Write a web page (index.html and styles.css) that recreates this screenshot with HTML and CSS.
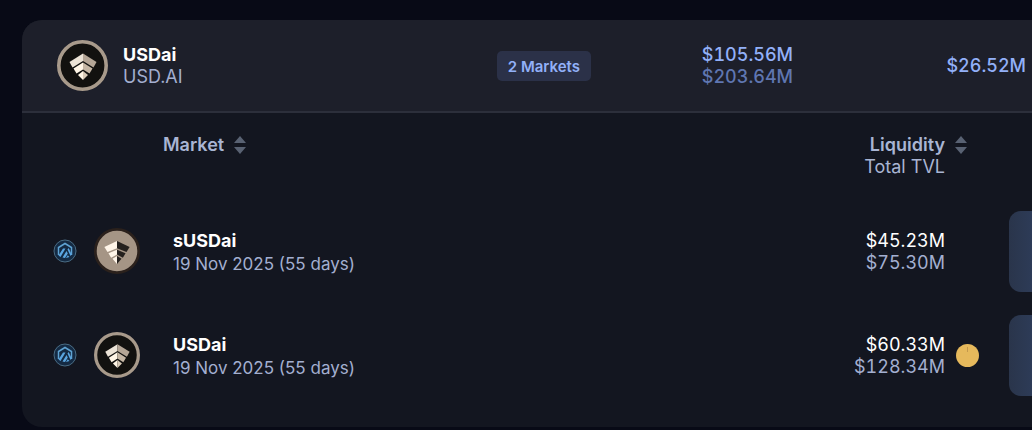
FILE: index.html
```html
<!doctype html>
<html lang="en">
    <head>
        <meta charset="utf-8">
        <meta name="viewport" content="width=device-width, initial-scale=1">
        <title>Markets</title>
        <link rel="stylesheet" href="styles.css">
    </head>
    <body>
        <svg class="is-hidden" aria-hidden="true">
            <symbol id="sort" viewBox="0 0 12 18">
                <path d="M6 0L12 7H0z"/>
                <path d="M6 18L0 11H12z"/>
            </symbol>
            <symbol id="usdai" viewBox="0 0 51 51">
                <circle cx="25.500" cy="25.500" r="23.700" fill="#12110f" stroke="#a89a8b" stroke-width="3.600"/>
                <path d="M26 13.500L12.500 22l3 5.500L26 21z" fill="#ece3d6"/>
                <path d="M26 13.500L39.500 22l-3 5.500L26 21z" fill="#b5a696"/>
                <path d="M26 22.500L16.500 28.500l3 5L26 29.500z" fill="#fff5e6"/>
                <path d="M26 22.500l9.500 6-3 5L26 29.500z" fill="#c5b6a4"/>
                <path d="M26 31L21 35l5 5z" fill="#fff5e6"/>
                <path d="M26 31l5 4-5 5z" fill="#d8cab8"/>
            </symbol>
            <symbol id="susdai" viewBox="0 0 51 51">
                <circle cx="25.500" cy="25.500" r="24" fill="#a59585" stroke="#2b211c" stroke-width="3"/>
                <path d="M25.500 14.500L11.500 21l3.500 5.500 10.500-4z" fill="#fff5e8"/>
                <path d="M25.500 14.500l14 6.500-3.500 5.500-10.500-4z" fill="#25211e"/>
                <path d="M25.500 24L16 28l3 5 6.500-3.500z" fill="#fff5e8"/>
                <path d="M25.500 24L35 28l-3 5-6.500-3.500z" fill="#25211e"/>
                <path d="M25.500 31l-5 3 5 6z" fill="#fff5e8"/>
                <path d="M25.500 31l5 3-5 6z" fill="#25211e"/>
            </symbol>
            <symbol id="arbitrum" viewBox="0 0 24 24">
                <circle cx="12" cy="12" r="11" fill="#142a43" stroke="#4a6c84"/>
                <path d="M5.500 16V8.500L12 4.500l6.500 4V16" fill="none" stroke="#5fa3d3" stroke-width="1.500"/>
                <path d="M5.500 16.500l4.500-7h2.500L7.500 18zM9.500 18.500l4-6.500 1.300 2.500-2.800 4.500zM14.500 10.500l1.200-1.500 3 6.500-1.200 1.500z" fill="#5aa5e0"/>
                <path d="M13 19l1.800-2.800L16.500 18z" fill="#5aa5e0"/>
            </symbol>
        </svg>
        <section class="panel">
            <header class="summary">
                <div class="asset">
                    <svg class="asset-icon" aria-hidden="true"><use href="#usdai"/></svg>
                    <div>
                        <h1 class="name">USDai</h1>
                        <div class="muted">USD.AI</div>
                    </div>
                </div>
                <span class="badge">2 Markets</span>
                <div class="totals">
                    <div>$105.56M</div>
                    <div class="totals-sub">$203.64M</div>
                </div>
                <div class="totals">$26.52M</div>
            </header>
            <table class="markets">
                <thead>
                    <tr>
                        <th class="market-head" scope="col">
                            <button class="sort" type="button">Market <svg class="sort-icon" aria-hidden="true"><use href="#sort"/></svg></button>
                        </th>
                        <th class="liquidity-col" scope="col">
                            <div class="liquidity">
                                <button class="sort" type="button">
                                    <span>Liquidity<br><span class="sort-sub">Total TVL</span></span>
                                    <svg class="sort-icon" aria-hidden="true"><use href="#sort"/></svg>
                                </button>
                            </div>
                        </th>
                        <td class="action-col"></td>
                    </tr>
                </thead>
                <tbody>
                    <tr>
                        <td>
                            <div class="market">
                                <svg class="chain-icon" aria-hidden="true"><use href="#arbitrum"/></svg>
                                <svg class="market-icon" aria-hidden="true"><use href="#susdai"/></svg>
                                <div class="market-text">
                                    <div class="name">sUSDai</div>
                                    <div class="expiry">19 Nov 2025 (55 days)</div>
                                </div>
                            </div>
                        </td>
                        <td>
                            <div class="liquidity">
                                <div class="amounts">
                                    <div class="value">$45.23M</div>
                                    <div class="muted">$75.30M</div>
                                </div>
                                <span class="slot"></span>
                            </div>
                        </td>
                        <td><button class="action" type="button" aria-label="Open sUSDai market"></button></td>
                    </tr>
                    <tr>
                        <td>
                            <div class="market">
                                <svg class="chain-icon" aria-hidden="true"><use href="#arbitrum"/></svg>
                                <svg class="market-icon" aria-hidden="true"><use href="#usdai"/></svg>
                                <div class="market-text">
                                    <div class="name">USDai</div>
                                    <div class="expiry">19 Nov 2025 (55 days)</div>
                                </div>
                            </div>
                        </td>
                        <td>
                            <div class="liquidity">
                                <div class="amounts">
                                    <div class="value">$60.33M</div>
                                    <div class="muted">$128.34M</div>
                                </div>
                                <svg class="slot" viewBox="0 0 23 23" aria-hidden="true">
                                    <circle cx="11.500" cy="11.500" r="11.500" fill="#e6b95c"/>
                                    <path d="M11.500 3v5" stroke="#c4994d"/>
                                </svg>
                            </div>
                        </td>
                        <td><button class="action" type="button" aria-label="Open USDai market"></button></td>
                    </tr>
                </tbody>
            </table>
        </section>
    </body>
</html>
```
FILE: styles.css
```css
* {
    box-sizing: border-box;
}
body {
    margin: 0;
    padding: 20px 0 3px 22px;
    background-color: #080a16;
    color: #a3afd0;
    font-family: Inter, "Liberation Sans", sans-serif;
    font-size: 18px;
    line-height: 22px;
}
svg {
    display: block;
    flex-shrink: 0;
}
.is-hidden {
    display: none;
}
.panel {
    background-color: #131620;
    border-radius: 20px 0 0 20px;
    padding-bottom: 20px;
    overflow: hidden;
}
.summary {
    display: grid;
    grid-template-columns: 1fr auto 202px 233px;
    align-items: center;
    padding: 20px 6px 20px 35px;
    background-color: #1d1f2a;
    border-bottom: 2px solid #2c2f3b;
}
.asset {
    display: flex;
    align-items: center;
    gap: 15px;
}
.asset-icon {
    width: 51px;
    height: 51px;
}
.name {
    margin: 0;
    color: #fff;
    font-size: 18px;
    font-weight: 700;
}
.muted {
    color: #a3afd0;
}
.badge {
    padding: 5px 11px 3px;
    border-radius: 5px;
    background-color: #2b3148;
    color: #92b0f8;
    font-size: 15px;
    font-weight: 600;
}
.totals {
    color: #92b0f8;
    font-variant-numeric: tabular-nums;
    font-weight: 500;
    text-align: right;
}
.totals-sub {
    color: #5f76b1;
}
.markets {
    width: 100%;
    border-collapse: collapse;
    table-layout: fixed;
}
.markets th,
.markets td {
    padding: 0;
    text-align: left;
}
.markets thead th {
    padding: 21px 0;
    vertical-align: top;
}
.markets .market-head {
    padding-left: 141px;
}
.markets tbody tr {
    height: 104px;
}
.liquidity-col {
    width: 300px;
}
.action-col {
    width: 23px;
}
.sort {
    display: flex;
    gap: 10px;
    padding: 0;
    border: 0;
    background: none;
    color: #a9b5d3;
    font: inherit;
    font-weight: 600;
    text-align: right;
    cursor: pointer;
}
.sort-sub {
    font-weight: 400;
}
.sort-icon {
    width: 12px;
    height: 18px;
    margin-top: 2px;
    fill: #596273;
}
.market {
    display: flex;
    align-items: center;
    padding-left: 31px;
}
.market-text {
    padding-top: 4px;
}
.chain-icon {
    width: 24px;
    height: 24px;
    margin-right: 17px;
}
.market-icon {
    width: 46px;
    height: 46px;
    margin-right: 33px;
}
.expiry {
    font-size: 17px;
    line-height: 24px;
}
.liquidity {
    display: flex;
    justify-content: flex-end;
    align-items: center;
    gap: 11px;
    padding-right: 30px;
    text-align: right;
}
.liquidity .sort {
    padding-right: 12px;
}
.amounts {
    padding-top: 2px;
    font-variant-numeric: tabular-nums;
}
.value {
    color: #fff;
}
.slot {
    width: 23px;
    height: 23px;
}
.action {
    display: block;
    width: 100%;
    height: 81px;
    padding: 0;
    border: 0;
    border-radius: 12px 0 0 12px;
    background: linear-gradient(to right, #2a354b, #2d3b57);
    cursor: pointer;
}
```
